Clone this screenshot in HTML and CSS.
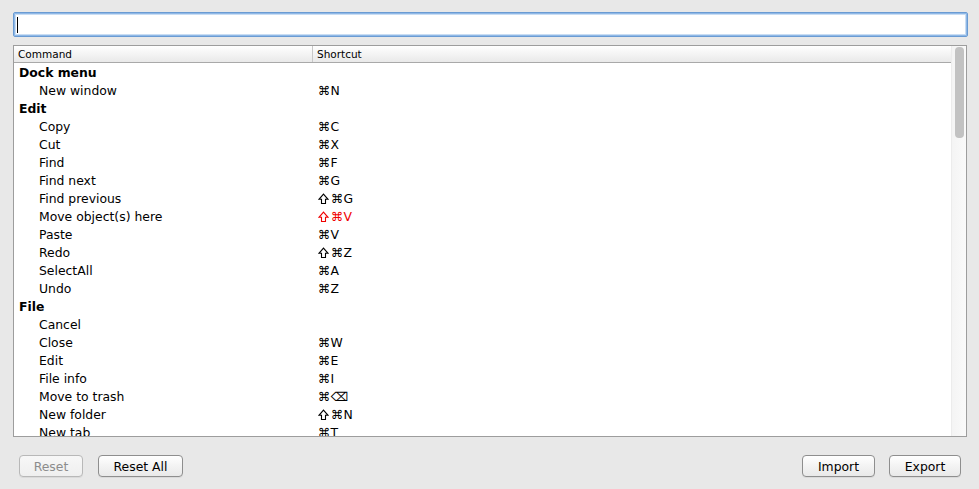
FILE: index.html
```html
<!DOCTYPE html>
<html>
<head>
<meta charset="utf-8">
<link rel="stylesheet" href="styles.css">
</head>
<body>
<div class="page">
  <div class="search"><span class="caret"></span></div>
  <div class="table">
    <div class="main">
      <div class="header">
        <div class="hcell c1">Command</div>
        <div class="hcell c2">Shortcut</div>
      </div>
      <div class="rows">
        <div class="row group"><span class="c1">Dock menu</span><span class="c2"></span></div>
        <div class="row"><span class="c1">New window</span><span class="c2">⌘N</span></div>
        <div class="row group"><span class="c1">Edit</span><span class="c2"></span></div>
        <div class="row"><span class="c1">Copy</span><span class="c2">⌘C</span></div>
        <div class="row"><span class="c1">Cut</span><span class="c2">⌘X</span></div>
        <div class="row"><span class="c1">Find</span><span class="c2">⌘F</span></div>
        <div class="row"><span class="c1">Find next</span><span class="c2">⌘G</span></div>
        <div class="row"><span class="c1">Find previous</span><span class="c2"><svg class="shift" viewBox="0 0 11 12" width="11" height="12" aria-label="⇧"><path d="M5.5 1.2 L10 6.3 H7.5 V10.5 H3.5 V6.3 H1 Z"/></svg>⌘G</span></div>
        <div class="row conflict"><span class="c1">Move object(s) here</span><span class="c2"><svg class="shift" viewBox="0 0 11 12" width="11" height="12" aria-label="⇧"><path d="M5.5 1.2 L10 6.3 H7.5 V10.5 H3.5 V6.3 H1 Z"/></svg>⌘V</span></div>
        <div class="row"><span class="c1">Paste</span><span class="c2">⌘V</span></div>
        <div class="row"><span class="c1">Redo</span><span class="c2"><svg class="shift" viewBox="0 0 11 12" width="11" height="12" aria-label="⇧"><path d="M5.5 1.2 L10 6.3 H7.5 V10.5 H3.5 V6.3 H1 Z"/></svg>⌘Z</span></div>
        <div class="row"><span class="c1">SelectAll</span><span class="c2">⌘A</span></div>
        <div class="row"><span class="c1">Undo</span><span class="c2">⌘Z</span></div>
        <div class="row group"><span class="c1">File</span><span class="c2"></span></div>
        <div class="row"><span class="c1">Cancel</span><span class="c2"></span></div>
        <div class="row"><span class="c1">Close</span><span class="c2">⌘W</span></div>
        <div class="row"><span class="c1">Edit</span><span class="c2">⌘E</span></div>
        <div class="row"><span class="c1">File info</span><span class="c2">⌘I</span></div>
        <div class="row"><span class="c1">Move to trash</span><span class="c2">⌘⌫</span></div>
        <div class="row"><span class="c1">New folder</span><span class="c2"><svg class="shift" viewBox="0 0 11 12" width="11" height="12" aria-label="⇧"><path d="M5.5 1.2 L10 6.3 H7.5 V10.5 H3.5 V6.3 H1 Z"/></svg>⌘N</span></div>
        <div class="row"><span class="c1">New tab</span><span class="c2">⌘T</span></div>
        <div class="row"><span class="c1">New window</span><span class="c2">⌘N</span></div>
        <div class="row"><span class="c1">Open</span><span class="c2">⌘O</span></div>
      </div>
    </div>
    <div class="scrollbar"><div class="thumb"></div></div>
  </div>
  <div class="buttons">
    <button class="btn disabled w-reset">Reset</button>
    <button class="btn w-resetall">Reset All</button>
    <div class="spacer"></div>
    <button class="btn w-import">Import</button>
    <button class="btn w-export">Export</button>
  </div>
</div>
</body>
</html>
```

FILE: styles.css
```css
html, body {
  margin: 0;
  padding: 0;
  background: #e8e8e8;
  font-family: "DejaVu Sans", sans-serif;
  color: #000;
}
.page {
  width: 979px;
  height: 489px;
  box-sizing: border-box;
  padding: 12px 12px 0 13px;
  display: flex;
  flex-direction: column;
}
.search {
  height: 25px;
  box-sizing: border-box;
  border: 1px solid #6a9bd3;
  border-radius: 2px;
  box-shadow: inset 0 0 0 1px #8fb8e6, inset 0 0 0 2px #c9ddf3;
  background: #fff;
  display: flex;
  align-items: center;
  padding-left: 3px;
  margin-right: -1px;
}
.caret {
  width: 1px;
  height: 16px;
  background: #000;
}
.table {
  margin-top: 8px;
  height: 392px;
  width: 954px;
  box-sizing: border-box;
  border: 1px solid #9d9d9d;
  background: #fff;
  display: flex;
  overflow: hidden;
}
.main {
  flex: 1;
  display: flex;
  flex-direction: column;
  min-width: 0;
}
.header {
  height: 17px;
  flex: none;
  box-sizing: border-box;
  border-bottom: 1px solid #a9a9a9;
  background: linear-gradient(#ffffff, #f6f6f6 40%, #e9e9e9);
  display: flex;
  font-size: 10.5px;
  line-height: 16px;
}
.hcell.c1 {
  width: 294px;
  padding-left: 4px;
  border-right: 1px solid #c8c8c8;
}
.hcell.c2 {
  padding-left: 4px;
}
.rows {
  flex: 1;
  overflow: hidden;
  padding-top: 1px;
}
.row {
  height: 18px;
  display: flex;
  font-size: 12.4px;
  line-height: 18px;
  white-space: nowrap;
}
.row .c1 {
  width: 279px;
  padding-left: 25px;
  flex: none;
}
.row.group .c1 {
  padding-left: 5px;
  width: 299px;
  font-weight: bold;
}
.row .c2 {
  display: flex;
  align-items: center;
}
.shift {
  fill: none;
  stroke: currentColor;
  stroke-width: 1.1;
  stroke-linejoin: miter;
  margin-right: 2px;
  margin-top: -1px;
}
.row.conflict .c2 {
  color: #f00000;
}
.scrollbar {
  width: 15px;
  flex: none;
  box-sizing: border-box;
  border-left: 1px solid #ececec;
  background: linear-gradient(90deg, #f4f4f4, #fafafa);
  padding: 1px 2px 0 3px;
}
.thumb {
  height: 91px;
  border-radius: 4px;
  background: #c2c2c2;
}
.buttons {
  display: flex;
  margin-top: 18px;
  padding-left: 6px;
  padding-right: 6px;
  gap: 15px;
}
.spacer {
  flex: 1;
}
.btn {
  height: 22px;
  box-sizing: border-box;
  border: 1px solid #8e8e8e;
  border-radius: 4px;
  background: linear-gradient(#ffffff, #f3f3f3 50%, #e9e9e9);
  font-family: "DejaVu Sans", sans-serif;
  font-size: 12.4px;
  color: #000;
  padding: 0;
  box-shadow: 0 1px 0 rgba(0,0,0,0.06);
}
.btn.disabled {
  color: #8c8c8c;
  border-color: #b8b8b8;
  background: linear-gradient(#f7f7f7, #efefef);
}
.w-reset { width: 64px; }
.w-resetall { width: 85px; }
.w-import { width: 73px; margin-right: -1px; }
.w-export { width: 72px; }
```
